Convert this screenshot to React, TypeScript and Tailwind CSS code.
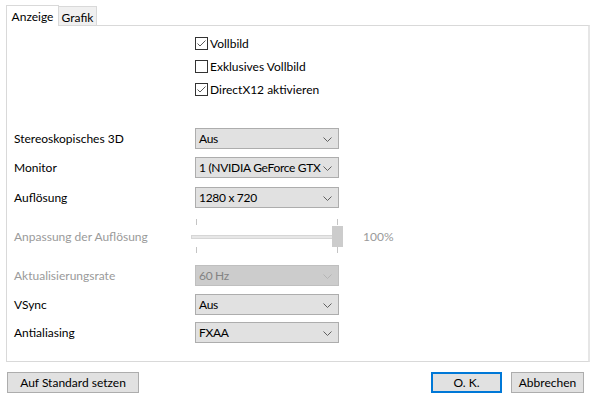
import React from 'react';

const font = { fontFamily: 'Lato, "Liberation Sans", sans-serif' };

const Chevron = ({ disabled }: { disabled?: boolean }) => (
  <svg width="9" height="6" viewBox="0 0 9 6" className="absolute right-[6px] top-[8px]">
    <polyline points="0.5,0.5 4.5,4.5 8.5,0.5" fill="none" stroke={disabled ? '#b5b5b5' : '#606060'} strokeWidth="1" />
  </svg>
);

const Check = ({ label, checked }: { label: string; checked: boolean }) => (
  <div className="h-[23px] flex items-center pl-[181px]">
    <div className="w-[13px] h-[13px] border border-[#333333] bg-white flex items-center justify-center">
      {checked && (
        <svg width="11" height="11" viewBox="0 0 11 11">
          <polyline points="1.5,5.5 4,8 9.5,2.5" fill="none" stroke="#5a5a5a" strokeWidth="1" />
        </svg>
      )}
    </div>
    <span className="ml-[2px] text-[12px] text-black">{label}</span>
  </div>
);

const Select = ({ value, disabled }: { value: string; disabled?: boolean }) => (
  <div
    className={`relative w-[144px] h-[21px] border flex items-center pl-[3px] text-[12px] overflow-hidden whitespace-nowrap ${
      disabled ? 'bg-[#cccccc] border-[#bfbfbf] text-[#838383]' : 'bg-[#e1e1e1] border-[#adadad] text-black'
    }`}
  >
    <span className="tracking-[-0.3px]">{value}</span>
    <div className={`absolute right-0 top-0 h-full w-[15px] ${disabled ? 'bg-[#cccccc]' : 'bg-[#e1e1e1]'}`}>
      <Chevron disabled={disabled} />
    </div>
  </div>
);

const Row = ({ label, value, disabled, className }: { label: string; value: string; disabled?: boolean; className: string }) => (
  <div className={`flex items-center h-[21px] ${className}`}>
    <span className={`w-[181px] text-[12px] ${disabled ? 'text-[#9a9a9a]' : 'text-black'}`}>{label}</span>
    <Select value={value} disabled={disabled} />
  </div>
);

export default function App() {
  return (
    <div className="w-[596px] h-[397px] bg-white overflow-hidden" style={font}>
      {/* Tabs */}
      <div className="flex items-end pl-[6px] pt-[5px] h-[26px] relative z-10">
        <div className="h-[21px] w-[53px] border border-[#d9d9d9] border-b-0 bg-white text-[12px] text-black flex items-start justify-center pt-[2px]">
          Anzeige
        </div>
        <div className="h-[19px] w-[38px] border border-[#d9d9d9] border-l-0 border-b-0 bg-[#f0f0f0] text-[12px] text-black flex items-start justify-center pt-[2px] mb-[1px]">
          Grafik
        </div>
      </div>

      {/* Panel */}
      <div className="ml-[6px] mt-[-1px] w-[584px] h-[337px] border border-[#d9d9d9] border-r-[2px] border-r-[#e6e6e6] bg-white pl-[7px] pt-[6px]">
        <Check label="Vollbild" checked />
        <Check label="Exklusives Vollbild" checked={false} />
        <Check label="DirectX12 aktivieren" checked />

        <Row label="Stereoskopisches 3D" value="Aus" className="mt-[27px]" />
        <Row label="Monitor" value="1 (NVIDIA GeForce GTX 1060 6GB)" className="mt-[8px]" />
        <Row label="Auflösung" value="1280 x 720" className="mt-[9px]" />

        {/* Slider */}
        <div className="flex items-center h-[42px] mt-[8px]">
          <span className="w-[177px] text-[12px] text-[#9a9a9a]">Anpassung der Auflösung</span>
          <div className="relative w-[152px] h-[42px]">
            <div className="absolute left-[5px] top-[3px] w-px h-[6px] bg-[#c4c4c4]" />
            <div className="absolute left-[146px] top-[3px] w-px h-[6px] bg-[#c4c4c4]" />
            <div className="absolute left-[5px] top-[31px] w-px h-[6px] bg-[#c4c4c4]" />
            <div className="absolute left-[146px] top-[31px] w-px h-[6px] bg-[#c4c4c4]" />
            <div className="absolute left-0 top-[19px] w-[152px] h-[4px] bg-[#e7e7e7] border border-[#d6d6d6]" />
            <div className="absolute left-[141px] top-[10px] w-[11px] h-[21px] bg-[#cccccc]" />
          </div>
          <span className="ml-[20px] text-[12px] text-[#9a9a9a]">100%</span>
        </div>

        <Row label="Aktualisierungsrate" value="60 Hz" disabled className="mt-[7px]" />
        <Row label="VSync" value="Aus" className="mt-[8px]" />
        <Row label="Antialiasing" value="FXAA" className="mt-[7px]" />
      </div>

      {/* Buttons */}
      <div className="flex items-center mt-[10px] px-[7px]">
        <button className="w-[132px] h-[21px] bg-[#e1e1e1] border border-[#adadad] text-[12px] text-black">
          Auf Standard setzen
        </button>
        <div className="flex-1" />
        <button className="w-[71px] h-[21px] bg-[#e1e1e1] border-2 border-[#0078d7] text-[12px] text-black">
          O. K.
        </button>
        <button className="ml-[9px] mr-[5px] w-[73px] h-[21px] bg-[#e1e1e1] border border-[#adadad] text-[12px] text-black">
          Abbrechen
        </button>
      </div>
    </div>
  );
}
